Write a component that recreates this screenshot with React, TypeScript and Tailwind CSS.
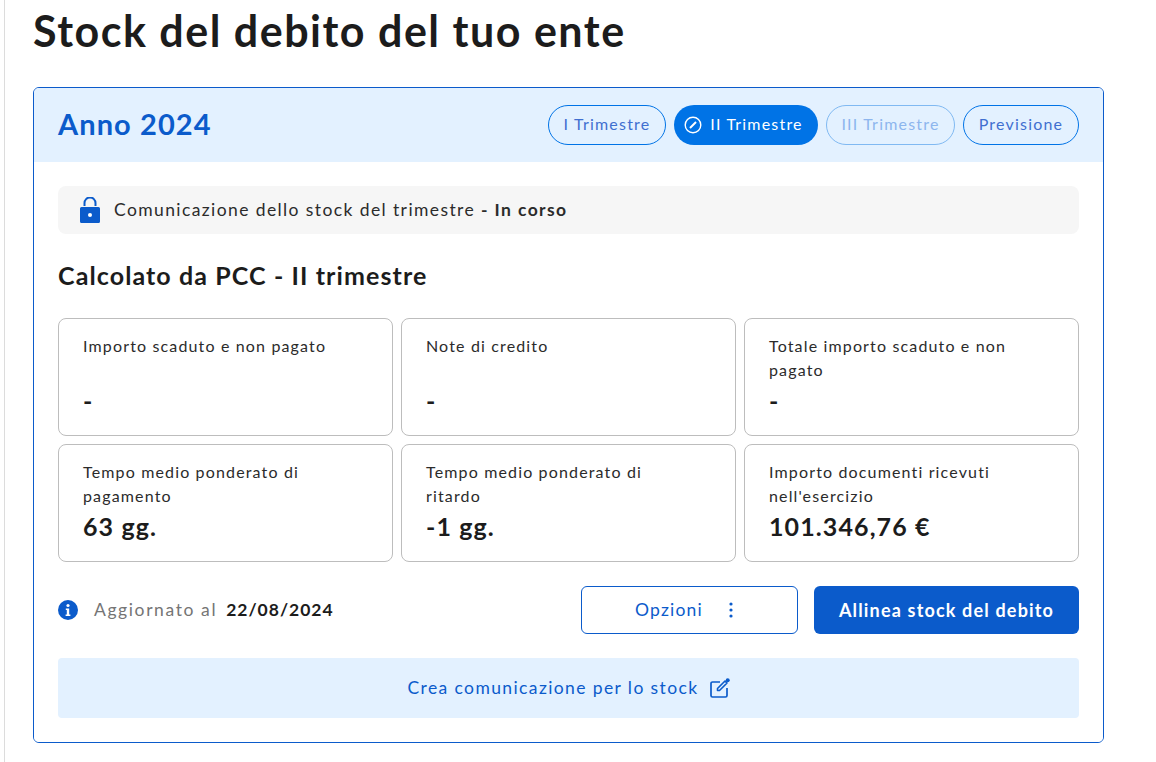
import React from 'react';

const metrics = [
  { label: 'Importo scaduto e non pagato', value: '-' },
  { label: 'Note di credito', value: '-' },
  { label: 'Totale importo scaduto e non pagato', value: '-' },
  { label: 'Tempo medio ponderato di pagamento', value: '63 gg.' },
  { label: 'Tempo medio ponderato di ritardo', value: '-1 gg.' },
  { label: "Importo documenti ricevuti nell'esercizio", value: '101.346,76 €' },
];

const MetricCard = ({ label, value }: { label: string; value: string }) => (
  <div className="h-[118px] rounded-lg border border-[#bdbdbd] bg-white pt-[15px] pr-10 pl-6">
    <p className="h-12 text-[16px] leading-6 tracking-[1.15px] text-[#2b2b2b]">{label}</p>
    <p className="pt-[3px] text-[25px] leading-[30px] font-bold tracking-[1.1px] text-[#1c1c1c]">{value}</p>
  </div>
);

export default function App() {
  return (
    <div className="h-[762px] w-[1156px] overflow-hidden bg-white font-['Lato',sans-serif]">
      <div className="ml-1 h-full border-l border-[#dcdcdc] pl-7">
        <h1 className="h-[87px] pt-[5px] text-[43px] leading-[52px] font-bold tracking-[1.5px] text-[#1c1c1c]">
          Stock del debito del tuo ente
        </h1>

        <div className="w-[1071px] overflow-hidden rounded-md border border-[#0b5bcb]">
          <div className="flex h-[74px] items-center justify-between bg-[#e3f1ff] pr-6 pl-6">
            <h2 className="pb-[2px] text-[29px] font-bold tracking-[1.1px] text-[#0b5bcb]">Anno 2024</h2>
            <div className="flex gap-2 text-[16px] tracking-[1.2px]">
              <button className="h-10 w-[118px] rounded-[20px] border border-[#0073e6] pb-[2px] text-[#3f6fd0]">I Trimestre</button>
              <button className="flex h-10 w-[144px] items-center justify-center gap-2 rounded-[20px] bg-[#0073e6] pr-[5px] pb-[2px] text-white">
                <svg width="18" height="18" viewBox="0 0 18 18" fill="none" stroke="white" className="mt-[2px]">
                  <circle cx="9" cy="9" r="7.800" strokeWidth="1.4" />
                  <path d="M6 12 12 6" strokeWidth="2" />
                </svg>
                II Trimestre
              </button>
              <button className="h-10 w-[129px] rounded-[20px] border border-[#80b9f2] pb-[2px] text-[#8db6ee]">III Trimestre</button>
              <button className="h-10 w-[116px] rounded-[20px] border border-[#0073e6] pb-[2px] text-[#3f6fd0]">Previsione</button>
            </div>
          </div>

          <div className="h-[580px] bg-white px-6 pt-6">
            <div className="flex h-12 items-center gap-[14px] rounded-lg bg-[#f6f6f6] pl-[22px]">
              <svg width="20" height="26" viewBox="0 0 20 26">
                <path d="M4.500 9V6a5.500 5.500 0 0 1 11 0v3" fill="none" stroke="#0b5bcb" strokeWidth="2" />
                <path d="M1.500 10h17A1.500 1.500 0 0 1 20 11.500V24.500A1.500 1.500 0 0 1 18.500 26H1.500A1.500 1.500 0 0 1 0 24.500V11.500A1.500 1.500 0 0 1 1.500 10Z" fill="#0b5bcb" />
                <circle cx="10" cy="18" r="2" fill="white" />
              </svg>
              <p className="text-[17.5px] tracking-[1.4px] text-[#2b2b2b]">
                Comunicazione dello stock del trimestre <span className="font-bold">- In corso</span>
              </p>
            </div>

            <h3 className="mt-6 mb-[26px] text-[25px] leading-[34px] font-bold tracking-[1.1px] text-[#1c1c1c]">
              Calcolato da PCC - II trimestre
            </h3>

            <div className="grid grid-cols-3 gap-2">
              {metrics.map(m => (
                <MetricCard key={m.label} label={m.label} value={m.value} />
              ))}
            </div>

            <div className="mt-6 flex h-12 items-center">
              <svg width="20" height="20" viewBox="0 0 20 20" className="mb-[1px]">
                <circle cx="10" cy="10" r="10" fill="#0b5bcb" />
                <circle cx="10" cy="5.500" r="1.600" fill="white" />
                <path d="M7.800 8.500h3.400v6h1.200v1.500H7.600v-1.500h1.200V10H7.800Z" fill="white" />
              </svg>
              <span className="ml-4 text-[17.5px] tracking-[1.6px] text-[#757575]">Aggiornato al</span>
              <span className="ml-[9px] text-[17.5px] font-bold tracking-[1px] text-[#1c1c1c]">22/08/2024</span>
              <button className="ml-auto flex h-12 w-[217px] items-center justify-center gap-[26px] rounded-md border border-[#0b5bcb] pr-[11px] text-[17.5px] tracking-[1.2px] text-[#0b5bcb]">
                <span className="pt-[1px]">Opzioni</span>
                <svg width="4" height="16" viewBox="0 0 4 16" fill="#0b5bcb">
                  <circle cx="2" cy="2" r="1.600" />
                  <circle cx="2" cy="8" r="1.600" />
                  <circle cx="2" cy="14" r="1.600" />
                </svg>
              </button>
              <button className="ml-4 h-12 w-[265px] rounded-md bg-[#0b5bcb] text-[18px] font-bold tracking-[1.17px] text-white">
                Allinea stock del debito
              </button>
            </div>

            <div className="mt-6 flex h-[60px] items-center justify-center gap-[11px] rounded bg-[#e3f1ff] text-[17.5px] tracking-[1.39px] text-[#0b5bcb]">
              Crea comunicazione per lo stock
              <svg width="20" height="20" viewBox="0 0 20 20" fill="none" stroke="#0b5bcb">
                <path d="M10 4H2.500A1.500 1.500 0 0 0 1 5.500V17.500A1.500 1.500 0 0 0 2.500 19H15.500A1.500 1.500 0 0 0 17 17.500V10" strokeWidth="1.700" />
                <path d="M7.500 10.500 15 3l2 2-7.500 7.500H7.500Z" strokeWidth="1.600" strokeLinejoin="round" />
                <circle cx="17.700" cy="2.300" r="2" fill="#0b5bcb" stroke="none" />
              </svg>
            </div>
          </div>
        </div>
      </div>
    </div>
  );
}
